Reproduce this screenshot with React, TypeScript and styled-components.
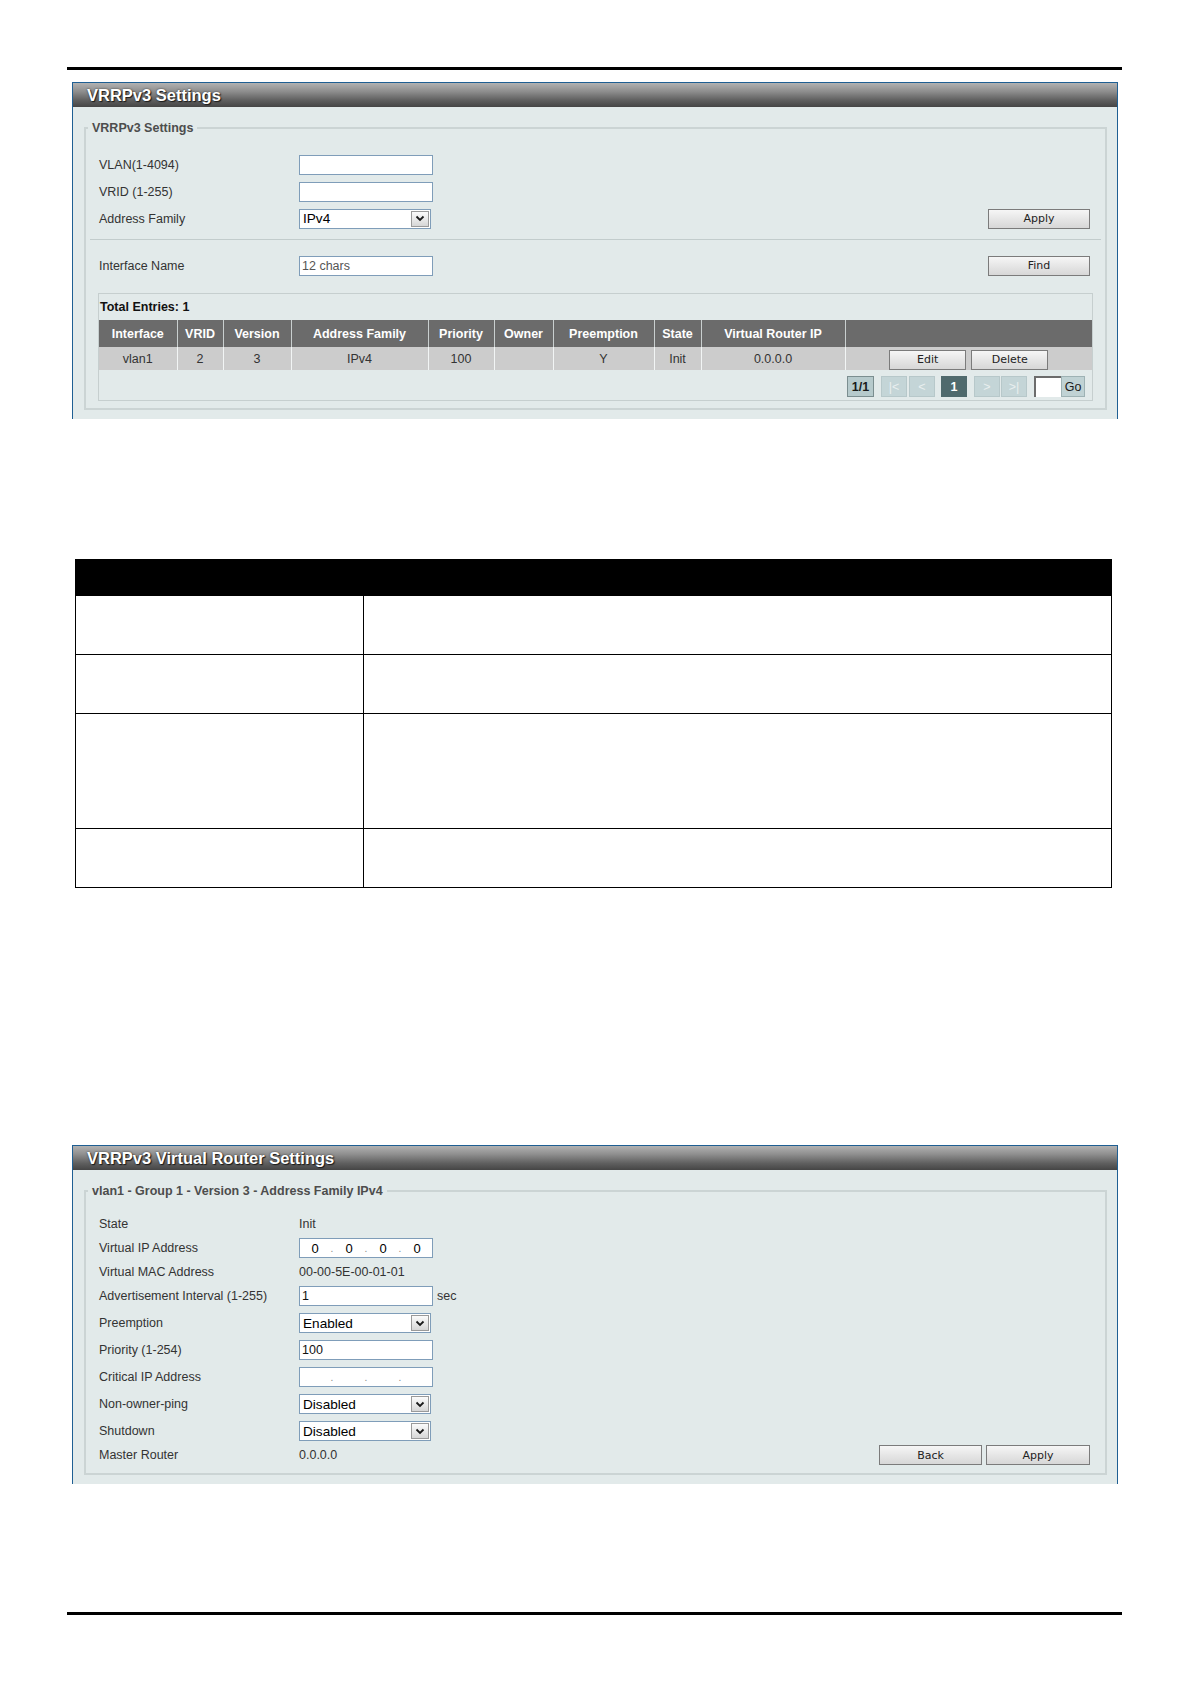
import React from "react";
import styled, { createGlobalStyle } from "styled-components";

const GlobalStyle = createGlobalStyle`
  html, body {
    margin: 0;
    padding: 0;
    background: #fff;
  }
  body {
    font-family: "Liberation Sans", Arial, sans-serif;
    font-size: 12.5px;
    color: #333;
  }
`;

const Page = styled.div`
  width: 1192px;
  height: 1684px;
  padding-top: 67px;
  box-sizing: border-box;
  overflow: hidden;
`;

const Rule = styled.div<{ $top: number }>`
  margin: ${(p) => p.$top}px 0 0 67px;
  width: 1055px;
  height: 3px;
  background: #000;
`;

const Panel = styled.section<{ $top: number }>`
  margin: ${(p) => p.$top}px 0 0 72px;
  width: 1046px;
  box-sizing: border-box;
  border: 1px solid #1f5f93;
  border-bottom: none;
  background: #e2eaea;
  padding-bottom: 9px;
`;

const PanelHead = styled.div`
  height: 24px;
  padding-left: 14px;
  background: linear-gradient(#b2b2b2 0%, #8e8e8e 35%, #5f5f5f 72%, #454545 100%);
  color: #fff;
  font-weight: bold;
  font-size: 16.5px;
  line-height: 24px;
  text-shadow: 1px 1px 1px #1a1a1a, 0 0 2px #333;
`;

const PanelBody = styled.div`
  padding: 14px 10px 0 11px;
`;

const Group = styled.fieldset`
  margin: 0;
  padding: 0;
  min-width: 0;
  border: 2px solid #cbd4d4;
`;

const Legend = styled.legend`
  margin-left: 2px;
  padding: 0 4px;
  font-weight: bold;
  font-size: 12.5px;
  line-height: 14px;
  color: #4d4d4d;
`;

const GroupInner = styled.div`
  padding: 16px 12px 7px;
`;

const FormRow = styled.div<{ $h: number }>`
  display: flex;
  align-items: center;
  height: ${(p) => p.$h}px;
`;

const Label = styled.div`
  width: 201px;
  flex-shrink: 0;
  padding-left: 1px;
  box-sizing: border-box;
  color: #333;
`;

const Value = styled.span`
  color: #333;
`;

const TextInput = styled.input`
  width: 134px;
  height: 20px;
  box-sizing: border-box;
  border: 1px solid #7f9db9;
  padding: 0 2px;
  margin: 0;
  background: #fff;
  font-family: "Liberation Sans", Arial, sans-serif;
  font-size: 12.5px;
  color: #111;
  outline: none;

  &::placeholder {
    color: #555;
  }
`;

const Unit = styled.span`
  margin-left: 4px;
  color: #333;
`;

const SelectBox = styled.div`
  width: 132px;
  height: 20px;
  box-sizing: border-box;
  border: 1px solid #7f9db9;
  background: #fff;
  display: flex;
  align-items: center;
`;

const SelectValue = styled.span`
  flex: 1;
  padding-left: 3px;
  font-size: 13.6px;
  color: #000;
`;

const SelectArrow = styled.span`
  width: 18px;
  height: 16px;
  margin-right: 1px;
  box-sizing: border-box;
  border: 1px solid #9a9a9a;
  background: linear-gradient(#fbfbfb, #e6e6e6 60%, #d6d6d6);
  display: flex;
  align-items: center;
  justify-content: center;
`;

const IpBox = styled.div`
  width: 134px;
  height: 20px;
  box-sizing: border-box;
  border: 1px solid #7f9db9;
  background: #fff;
  display: grid;
  grid-template-columns: 30px 4px 30px 4px 30px 4px 30px;
  align-items: center;
`;

const Octet = styled.span`
  text-align: center;
  font-size: 13px;
  color: #000;
`;

const Dot = styled.span`
  text-align: center;
  font-size: 10px;
  color: #8a8a8a;
`;

const Divider = styled.div`
  height: 1px;
  margin: 7px -8px 12px;
  background: #c2cccc;
`;

const Button = styled.button<{ $w?: number }>`
  width: ${(p) => p.$w ?? 102}px;
  height: 20px;
  padding: 0;
  margin: 0;
  box-sizing: border-box;
  border: 1px solid #7b7b7b;
  background: linear-gradient(#f6f6f6, #e6e6e6 50%, #d7d7d7);
  font-family: "DejaVu Sans", Verdana, sans-serif;
  font-size: 11px;
  color: #222;
`;

const ButtonGroup = styled.div`
  margin-left: auto;
  margin-right: 3px;
  display: flex;
  gap: 4px;
`;

const EntryBox = styled.div`
  margin-top: 14px;
  border: 1px solid #c6cfcf;
`;

const Total = styled.div`
  height: 26px;
  line-height: 26px;
  padding-left: 1px;
  font-weight: bold;
  color: #111;
`;

const Grid = styled.table`
  width: 100%;
  border-collapse: collapse;
  table-layout: fixed;
`;

const Th = styled.th`
  height: 27px;
  padding: 0;
  background: #6b6b6b;
  color: #fff;
  font-weight: bold;
  text-align: center;
  border-right: 1px solid #c9cfcf;

  &:last-child {
    border-right: none;
  }
`;

const Td = styled.td`
  height: 23px;
  padding: 0;
  background: #cccccc;
  color: #333;
  text-align: center;
  border-right: 1px solid #f2f5f5;

  &:last-child {
    border-right: none;
  }
`;

const ActionCell = styled.div`
  display: flex;
  justify-content: center;
  gap: 5px;
  padding-top: 2px;
`;

const Pager = styled.div`
  height: 30px;
  padding: 6px 7px 0 0;
  box-sizing: border-box;
  display: flex;
  justify-content: flex-end;
  align-items: flex-start;
`;

const PageBox = styled.span<{ $kind: "info" | "off" | "on" | "go"; $gap?: number }>`
  height: 21px;
  min-width: 24px;
  padding: 0 1px;
  margin-left: ${(p) => p.$gap ?? 0}px;
  box-sizing: border-box;
  display: inline-flex;
  align-items: center;
  justify-content: center;
  font-weight: ${(p) => (p.$kind === "info" || p.$kind === "on" ? "bold" : "normal")};
  border: 1px solid
    ${(p) =>
      p.$kind === "info" ? "#7b8e90" : p.$kind === "on" ? "#4f6a6d" : p.$kind === "go" ? "#9eb2b4" : "#b7c8ca"};
  background: ${(p) =>
    p.$kind === "info" ? "#b6cacc" : p.$kind === "on" ? "#4f6a6d" : p.$kind === "go" ? "#c0d2d4" : "#c4d5d7"};
  color: ${(p) => (p.$kind === "on" ? "#fff" : p.$kind === "off" ? "#e9efef" : "#1a1a1a")};
  width: ${(p) => (p.$kind === "info" ? 27 : p.$kind === "go" ? 24 : 26)}px;
`;

const PageInput = styled.input`
  width: 27px;
  height: 21px;
  margin: 0 0 0 7px;
  padding: 0;
  box-sizing: border-box;
  background: #fff;
  border-style: solid;
  border-width: 2px 0 0 2px;
  border-color: #6c6c6c;
  outline: none;
`;

const DescTable = styled.table`
  margin: 140px 0 0 75px;
  width: 1037px;
  border-collapse: collapse;
  table-layout: fixed;
`;

const DescHead = styled.th`
  height: 35px;
  padding: 0;
  background: #000;
  border: 1.5px solid #000;
`;

const DescCell = styled.td<{ $h: number }>`
  height: ${(p) => p.$h}px;
  padding: 0;
  border: 1.5px solid #000;
`;

const Chevron = () => (
  <svg width="10" height="7" viewBox="0 0 10 7">
    <path d="M1.5 1.5 5 5l3.5-3.5" fill="none" stroke="#1a1a1a" strokeWidth="1.8" />
  </svg>
);

const Select = ({ value }: { value: string }) => (
  <SelectBox>
    <SelectValue>{value}</SelectValue>
    <SelectArrow>
      <Chevron />
    </SelectArrow>
  </SelectBox>
);

const IpField = ({ parts }: { parts: string[] }) => (
  <IpBox>
    {parts.map((p, i) => (
      <React.Fragment key={i}>
        {i > 0 && <Dot>.</Dot>}
        <Octet>{p}</Octet>
      </React.Fragment>
    ))}
  </IpBox>
);

const columns = [
  { title: "Interface", w: 78 },
  { title: "VRID", w: 46 },
  { title: "Version", w: 68 },
  { title: "Address Family", w: 137 },
  { title: "Priority", w: 66 },
  { title: "Owner", w: 59 },
  { title: "Preemption", w: 101 },
  { title: "State", w: 47 },
  { title: "Virtual Router IP", w: 144 },
  { title: "", w: 0 },
];

const entries = [["vlan1", "2", "3", "IPv4", "100", "", "Y", "Init", "0.0.0.0"]];

const descRows = [58, 58, 113.5, 58];

export default function App() {
  return (
    <Page>
      <GlobalStyle />
      <Rule $top={0} />

      <Panel $top={12}>
        <PanelHead>VRRPv3 Settings</PanelHead>
        <PanelBody>
          <Group>
            <Legend>VRRPv3 Settings</Legend>
            <GroupInner>
              <FormRow $h={27}>
                <Label>VLAN(1-4094)</Label>
                <TextInput />
              </FormRow>
              <FormRow $h={27}>
                <Label>VRID (1-255)</Label>
                <TextInput />
              </FormRow>
              <FormRow $h={27}>
                <Label>Address Family</Label>
                <Select value="IPv4" />
                <ButtonGroup>
                  <Button>Apply</Button>
                </ButtonGroup>
              </FormRow>
              <Divider />
              <FormRow $h={27}>
                <Label>Interface Name</Label>
                <TextInput placeholder="12 chars" />
                <ButtonGroup>
                  <Button>Find</Button>
                </ButtonGroup>
              </FormRow>

              <EntryBox>
                <Total>Total Entries: 1</Total>
                <Grid>
                  <colgroup>
                    {columns.map((c, i) => (
                      <col key={i} style={c.w ? { width: c.w } : undefined} />
                    ))}
                  </colgroup>
                  <thead>
                    <tr>
                      {columns.map((c, i) => (
                        <Th key={i}>{c.title}</Th>
                      ))}
                    </tr>
                  </thead>
                  <tbody>
                    {entries.map((row, r) => (
                      <tr key={r}>
                        {row.map((cell, i) => (
                          <Td key={i}>{cell}</Td>
                        ))}
                        <Td>
                          <ActionCell>
                            <Button $w={77}>Edit</Button>
                            <Button $w={77}>Delete</Button>
                          </ActionCell>
                        </Td>
                      </tr>
                    ))}
                  </tbody>
                </Grid>
                <Pager>
                  <PageBox $kind="info">1/1</PageBox>
                  <PageBox $kind="off" $gap={7}>|&lt;</PageBox>
                  <PageBox $kind="off" $gap={2}>&lt;</PageBox>
                  <PageBox $kind="on" $gap={6}>1</PageBox>
                  <PageBox $kind="off" $gap={7}>&gt;</PageBox>
                  <PageBox $kind="off" $gap={1}>&gt;|</PageBox>
                  <PageInput />
                  <PageBox $kind="go">Go</PageBox>
                </Pager>
              </EntryBox>
            </GroupInner>
          </Group>
        </PanelBody>
      </Panel>

      <DescTable>
        <colgroup>
          <col style={{ width: 288 }} />
          <col />
        </colgroup>
        <thead>
          <tr>
            <DescHead />
            <DescHead />
          </tr>
        </thead>
        <tbody>
          {descRows.map((h, i) => (
            <tr key={i}>
              <DescCell $h={h} />
              <DescCell $h={h} />
            </tr>
          ))}
        </tbody>
      </DescTable>

      <Panel $top={257}>
        <PanelHead>VRRPv3 Virtual Router Settings</PanelHead>
        <PanelBody>
          <Group>
            <Legend>vlan1 - Group 1 - Version 3 - Address Family IPv4</Legend>
            <GroupInner>
              <FormRow $h={21}>
                <Label>State</Label>
                <Value>Init</Value>
              </FormRow>
              <FormRow $h={27}>
                <Label>Virtual IP Address</Label>
                <IpField parts={["0", "0", "0", "0"]} />
              </FormRow>
              <FormRow $h={21}>
                <Label>Virtual MAC Address</Label>
                <Value>00-00-5E-00-01-01</Value>
              </FormRow>
              <FormRow $h={27}>
                <Label>Advertisement Interval (1-255)</Label>
                <TextInput defaultValue="1" />
                <Unit>sec</Unit>
              </FormRow>
              <FormRow $h={27}>
                <Label>Preemption</Label>
                <Select value="Enabled" />
              </FormRow>
              <FormRow $h={27}>
                <Label>Priority (1-254)</Label>
                <TextInput defaultValue="100" />
              </FormRow>
              <FormRow $h={27}>
                <Label>Critical IP Address</Label>
                <IpField parts={["", "", "", ""]} />
              </FormRow>
              <FormRow $h={27}>
                <Label>Non-owner-ping</Label>
                <Select value="Disabled" />
              </FormRow>
              <FormRow $h={27}>
                <Label>Shutdown</Label>
                <Select value="Disabled" />
              </FormRow>
              <FormRow $h={21}>
                <Label>Master Router</Label>
                <Value>0.0.0.0</Value>
                <ButtonGroup>
                  <Button $w={103}>Back</Button>
                  <Button $w={104}>Apply</Button>
                </ButtonGroup>
              </FormRow>
            </GroupInner>
          </Group>
        </PanelBody>
      </Panel>

      <Rule $top={128} />
    </Page>
  );
}
